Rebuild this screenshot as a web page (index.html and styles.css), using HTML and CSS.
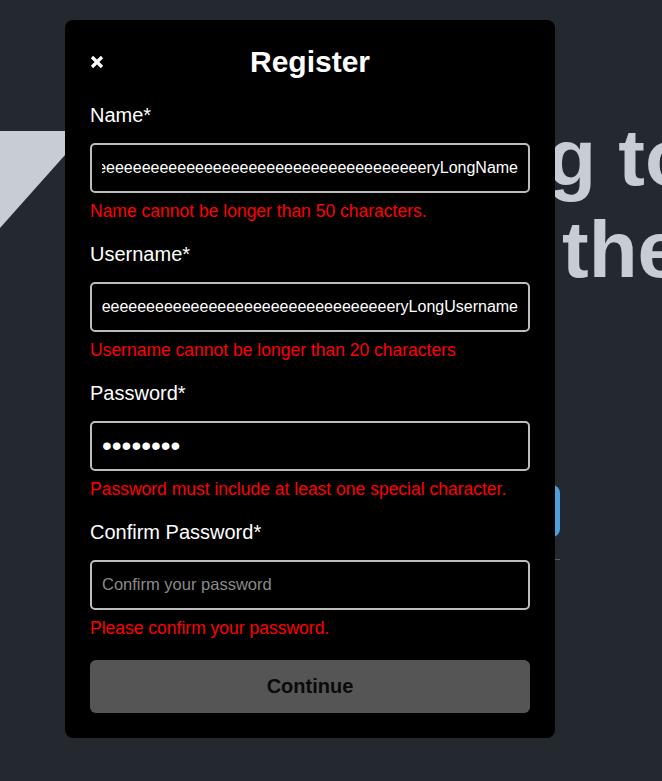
FILE: index.html
```html
<!DOCTYPE html>
<html lang="en">
<head>
<meta charset="utf-8">
<title>Register</title>
<link rel="stylesheet" href="styles.css">
</head>
<body>
<main class="page">
  <svg class="logo-shape" width="87" height="97" viewBox="0 0 87 97" aria-hidden="true"><polygon points="0,0 86.4,0 0,97" fill="#c8ccd4"/></svg>
  <section class="hero">
    <h1 class="hero-title"><span class="line line-1">Belonging to</span><span class="line line-2">the community</span></h1>
    <button class="cta" type="button">Get started</button>
    <hr class="divider">
  </section>
</main>

<div class="overlay">
  <form class="modal">
    <div class="modal-header">
      <button class="close" type="button" aria-label="Close">
        <svg width="14" height="14" viewBox="0 0 14 14"><path d="M2 2 L12 12 M12 2 L2 12" stroke="#fff" stroke-width="3.2" fill="none"/></svg>
      </button>
      <h2 class="modal-title">Register</h2>
    </div>

    <div class="field">
      <label class="label" for="name">Name*</label>
      <input class="input at-end" id="name" type="text" value="VeeeeeeeeeeeeeeeeeeeeeeeeeeeeeeeeeeeeeeeeeeeeeeeeeeeeeeeeeeryLongName">
      <p class="error">Name cannot be longer than 50 characters.</p>
    </div>

    <div class="field">
      <label class="label" for="username">Username*</label>
      <input class="input at-end" id="username" type="text" value="VeeeeeeeeeeeeeeeeeeeeeeeeeeeeeeeeeeeeeeeeeeeeeeeeeeeeeeeeeeryLongUsername">
      <p class="error">Username cannot be longer than 20 characters</p>
    </div>

    <div class="field">
      <label class="label" for="password">Password*</label>
      <input class="input password" id="password" type="password" value="abcdefgh">
      <p class="error">Password must include at least one special character.</p>
    </div>

    <div class="field">
      <label class="label" for="confirm">Confirm Password*</label>
      <input class="input" id="confirm" type="password" placeholder="Confirm your password">
      <p class="error">Please confirm your password.</p>
    </div>

    <button class="submit" type="button">Continue</button>
  </form>
</div>
</body>
</html>
```

FILE: styles.css
```css
html, body {
  margin: 0;
  padding: 0;
  height: 100%;
  overflow: hidden;
}

body {
  background: #24282f;
  font-family: "Liberation Sans", Arial, sans-serif;
  color: #fff;
}

/* background page */
.page {
  display: flex;
  align-items: flex-start;
  padding-top: 112px;
}

.logo-shape {
  display: block;
  flex-shrink: 0;
  margin-top: 19px;
}

.hero {
  flex-shrink: 0;
  width: 355px;
  margin-left: 118px;
}

.hero-title {
  margin: 0;
  font-size: 80px;
  font-weight: 700;
  line-height: normal;
  color: #c8ccd4;
  white-space: nowrap;
}

.line {
  display: block;
}

.line-2 {
  padding-left: 357px;
}

.cta {
  display: block;
  width: 100%;
  height: 52px;
  margin-top: 189px;
  border: 0;
  border-radius: 8px;
  background: #4a9fdf;
  color: #fff;
  font: 700 18px "Liberation Sans", Arial, sans-serif;
}

.divider {
  margin: 22px 0 0;
  border: 0;
  border-top: 1px solid #5c5f66;
}

/* modal */
.overlay {
  position: fixed;
  inset: 0;
  padding: 20px 0 0 65px;
}

.modal {
  width: 490px;
  box-sizing: border-box;
  padding: 25px;
  background: #000;
  border-radius: 8px;
}

.modal-header {
  display: grid;
  grid-template-columns: 1fr auto 1fr;
  align-items: center;
  margin-bottom: 25px;
}

.close {
  justify-self: start;
  display: flex;
  padding: 0;
  border: 0;
  background: none;
  cursor: pointer;
}

.close svg {
  display: block;
}

.modal-title {
  margin: 0;
  font-size: 30px;
  font-weight: 700;
  line-height: normal;
  color: #fff;
}

.field {
  margin-bottom: 21px;
}

.label {
  display: block;
  font-size: 20px;
  line-height: normal;
  margin-bottom: 16px;
  color: #fff;
}

.input {
  display: block;
  width: 100%;
  height: 50px;
  box-sizing: border-box;
  padding: 0 10px;
  border: 2px solid #bdbdbd;
  border-radius: 5px;
  background: #000;
  color: #fff;
  font-family: "Liberation Sans", Arial, sans-serif;
  font-size: 16px;
  outline: none;
}

.input.at-end {
  direction: rtl;
}

.input.password {
  font-size: 28px;
}

.input::placeholder {
  color: #8a8a8a;
  font-size: 16.5px;
}

.error {
  margin: 8px 0 0;
  font-size: 17.5px;
  line-height: normal;
  color: #ff0000;
}

.submit {
  display: block;
  width: 100%;
  height: 53px;
  border: 0;
  border-radius: 6px;
  background: #555555;
  color: #0a0a0a;
  font-family: "Liberation Sans", Arial, sans-serif;
  font-size: 20px;
  font-weight: 700;
}
```
